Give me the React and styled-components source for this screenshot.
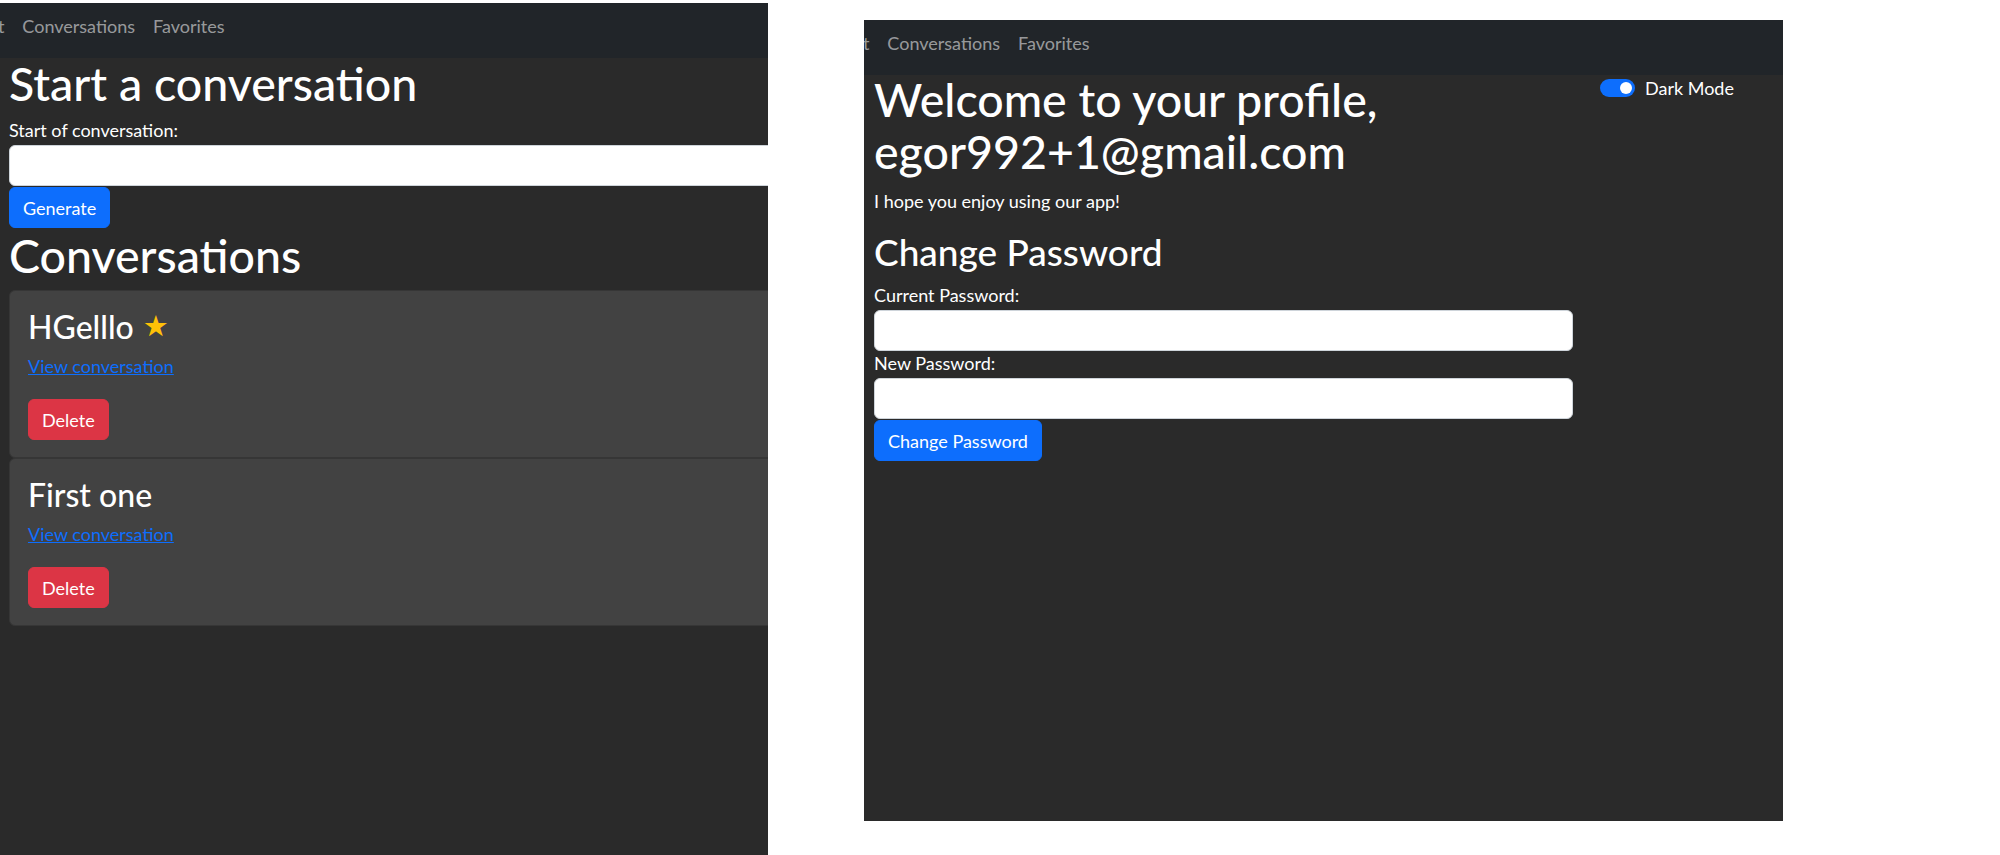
import React from 'react';
import styled, { createGlobalStyle } from 'styled-components';

const GlobalStyle = createGlobalStyle`
  html, body {
    margin: 0;
    padding: 0;
    background: #ffffff;
  }
  body {
    font-family: Lato, "Noto Sans", sans-serif;
    -webkit-font-smoothing: antialiased;
  }
  * {
    box-sizing: border-box;
  }
`;

const Canvas = styled.div`
  display: flex;
  align-items: flex-start;
  gap: 96px;
  width: 2000px;
  height: 855px;
  overflow: hidden;
  background: #ffffff;
`;

const Window = styled.div`
  flex-shrink: 0;
  display: flex;
  flex-direction: column;
  width: ${({ $width }) => $width}px;
  height: ${({ $height }) => $height}px;
  margin-top: ${({ $top }) => $top}px;
  background: #2a2a2a;
  color: #ffffff;
  overflow: hidden;
`;

const Navbar = styled.nav`
  flex-shrink: 0;
  display: flex;
  align-items: flex-start;
  height: 55px;
  padding-top: 10px;
  background: #212529;
  overflow: hidden;
`;

const NavTrack = styled.div`
  display: flex;
  align-items: center;
  margin-left: ${({ $shift }) => $shift}px;
`;

const NavLink = styled.a`
  padding: 0 9px;
  font-size: 18px;
  line-height: 26px;
  color: rgba(255, 255, 255, 0.55);
  text-decoration: none;
  white-space: nowrap;
`;

const Content = styled.div`
  width: ${({ $width }) => $width}px;
  padding: 0 9px;
`;

const Title = styled.h1`
  margin: ${({ $mt = 0 }) => $mt}px 0 ${({ $mb = 0 }) => $mb}px;
  font-size: 46.5px;
  font-weight: 500;
  line-height: ${({ $lh = 50 }) => $lh}px;
  color: #ffffff;
`;

const SubTitle = styled.h2`
  margin: 0 0 10px;
  font-size: 37px;
  font-weight: 500;
  line-height: 42px;
  color: #ffffff;
`;

const Text = styled.p`
  margin: 0 0 17px;
  font-size: 18px;
  line-height: 25px;
`;

const Label = styled.label`
  display: block;
  font-size: 18px;
  line-height: 25px;
  color: #ffffff;
`;

const Input = styled.input`
  display: block;
  width: 100%;
  height: 41px;
  margin-top: 2px;
  padding: 6px 13px;
  border: 1px solid #ced4da;
  border-radius: 6px;
  background: #ffffff;
  font-family: inherit;
  font-size: 18px;
`;

const Button = styled.button`
  display: inline-flex;
  align-items: center;
  height: 41px;
  margin-top: ${({ $mt = 0 }) => $mt}px;
  padding: 0 13px;
  border: 1px solid ${({ $variant }) => ($variant === 'danger' ? '#dc3545' : '#0d6efd')};
  border-radius: 6px;
  background: ${({ $variant }) => ($variant === 'danger' ? '#dc3545' : '#0d6efd')};
  color: #ffffff;
  font-family: inherit;
  font-size: 18px;
  cursor: pointer;
`;

const CardList = styled.div`
  display: flex;
  flex-direction: column;
`;

const Card = styled.div`
  height: 168px;
  padding: 18px 18px 17px;
  border: 1px solid #363636;
  border-radius: 6px;
  background: #424242;
`;

const CardTitle = styled.h3`
  display: flex;
  align-items: center;
  gap: 9px;
  margin: 0;
  font-size: 32px;
  font-weight: 500;
  line-height: 35px;
  color: #ffffff;
`;

const Star = styled.span`
  font-family: "DejaVu Sans", sans-serif;
  font-size: 29px;
  line-height: 35px;
  color: #ffc107;
`;

const CardLink = styled.a`
  display: block;
  margin-top: 9px;
  font-size: 18px;
  line-height: 26px;
  color: #0d6efd;
  text-decoration: underline;
`;

const Row = styled.div`
  display: flex;
  align-items: flex-start;
`;

const MainCol = styled.div`
  width: 719px;
  padding: 0 10px;
`;

const SideCol = styled.div`
  display: flex;
  align-items: center;
  gap: 10px;
  padding: 4px 0 0 17px;
`;

const Switch = styled.span`
  position: relative;
  display: inline-block;
  width: 35px;
  height: 18px;
  border-radius: 9px;
  background: #0d6efd;

  &::after {
    content: '';
    position: absolute;
    top: 3px;
    right: 3px;
    width: 12px;
    height: 12px;
    border-radius: 50%;
    background: #ffffff;
  }
`;

const SwitchLabel = styled.span`
  font-size: 18px;
  line-height: 18px;
  color: #ffffff;
`;

const Nav = ({ shift }) => (
  <Navbar>
    <NavTrack $shift={shift}>
      <NavLink href="#">Chat</NavLink>
      <NavLink href="#">Conversations</NavLink>
      <NavLink href="#">Favorites</NavLink>
    </NavTrack>
  </Navbar>
);

const conversations = [
  { id: 1, title: 'HGelllo', favorite: true },
  { id: 2, title: 'First one', favorite: false }
];

const ConversationsPage = () => (
  <Window $width={768} $height={852} $top={3}>
    <Nav shift={-42} />
    <Content $width={1000}>
      <Title $mb={10}>Start a conversation</Title>
      <Label>Start of conversation:</Label>
      <Input type="text" />
      <Button $mt={1}>Generate</Button>
      <Title as="h2" $mt={2} $mb={10}>Conversations</Title>
      <CardList>
        {conversations.map((c) => (
          <Card key={c.id}>
            <CardTitle>
              {c.title}
              {c.favorite && <Star>★</Star>}
            </CardTitle>
            <CardLink href="#">View conversation</CardLink>
            <Button $variant="danger" $mt={20}>Delete</Button>
          </Card>
        ))}
      </CardList>
    </Content>
  </Window>
);

const ProfilePage = () => (
  <Window $width={919} $height={801} $top={20}>
    <Nav shift={-41} />
    <Row>
      <MainCol>
        <Title $lh={52} $mt={-2} $mb={12}>
          Welcome to your profile, egor992+1@gmail.com
        </Title>
        <Text>I hope you enjoy using our app!</Text>
        <SubTitle>Change Password</SubTitle>
        <Label>Current Password:</Label>
        <Input type="password" />
        <Label>New Password:</Label>
        <Input type="password" />
        <Button $mt={1}>Change Password</Button>
      </MainCol>
      <SideCol>
        <Switch />
        <SwitchLabel>Dark Mode</SwitchLabel>
      </SideCol>
    </Row>
  </Window>
);

const App = () => (
  <>
    <GlobalStyle />
    <Canvas>
      <ConversationsPage />
      <ProfilePage />
    </Canvas>
  </>
);

export default App;
